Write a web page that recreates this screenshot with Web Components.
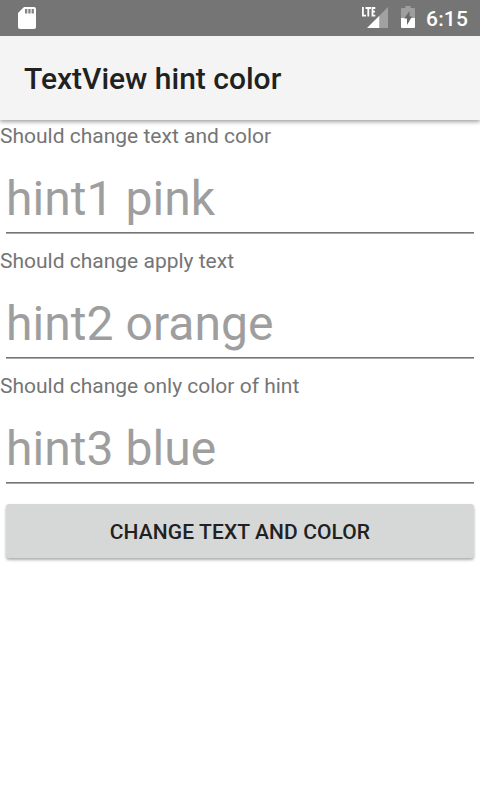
<!DOCTYPE html>
<html lang="en">
<head>
<meta charset="utf-8">
<title>TextView hint color</title>
<style>
html,body{margin:0;padding:0;background:#fff}
body{font-family:Roboto,"Liberation Sans",sans-serif;width:480px;height:800px;overflow:hidden}
</style>
</head>
<body>
<demo-screen></demo-screen>
<script>
function define(name, html) {
  const tpl = document.createElement('template');
  tpl.innerHTML = html;
  customElements.define(name, class extends HTMLElement {
    constructor() {
      super();
      this.attachShadow({ mode: 'open' }).appendChild(tpl.content.cloneNode(true));
    }
  });
}

define('status-bar', `
<style>
:host{display:flex;align-items:flex-start;height:36px;background:#757575;color:#fff;padding:0 12px 0 18px;box-sizing:border-box;position:relative;z-index:2}
.gap{flex:1}
svg{display:block;flex:none}
.sd{margin-top:7px}
.net{margin:7px 13px 0 0}
.bat{margin:6px 11px 0 0}
.time{font-size:21px;line-height:36px;font-weight:500;padding-top:1px;width:42px;white-space:nowrap;letter-spacing:.2px}
</style>
<svg class="sd" width="18" height="22" viewBox="0 0 18 22"><path fill="#fff" d="M6 0H16a2 2 0 0 1 2 2V20a2 2 0 0 1-2 2H2a2 2 0 0 1-2-2V6Z"/><path fill="#858585" d="M7 2h2.300v4.500H7zM10.300 2h2.300v4.500h-2.300zM13.600 2h2.300v4.500h-2.300z"/></svg>
<span class="gap"></span>
<svg class="net" width="26" height="21" viewBox="0 0 26 21"><path fill="#fff" fill-opacity=".32" d="M26 0V21H17.300V8.700Z"/><path fill="#fff" d="M17.300 8.700V21H5Z"/><path fill="none" stroke="#fff" stroke-width="1.800" d="M.9 0V9M0 8.600H4M3.500 1H9M6.300 1V9.500M13.300 1H10.500V8.600H13.300M10.500 4.700H13"/></svg>
<svg class="bat" width="14" height="22" viewBox="0 0 14 22"><path fill="#fff" fill-opacity=".3" d="M4.500 0h5v2H13a1 1 0 0 1 1 1v9H0V3a1 1 0 0 1 1-1h3.500z"/><path fill="#fff" d="M0 12h14v9a1 1 0 0 1-1 1H1a1 1 0 0 1-1-1z"/><path fill="#686868" d="M8.500 5v5.500H11L6 19v-6.500H3.200z"/></svg>
<span class="time"><slot></slot></span>`);

define('app-bar', `
<style>
:host{display:flex;align-items:center;height:84px;background:#f4f4f4;padding:0 24px;box-sizing:border-box;box-shadow:0 2px 4px rgba(0,0,0,.36);color:#212121;font-size:30px;font-weight:500;position:relative}
</style><span><slot></slot></span>`);

define('hint-field', `
<style>
:host{display:block;height:125px;box-sizing:border-box}
.label{font-size:21px;line-height:25px;padding-top:4px;color:#757575}
.input{margin:13px 6px 0;height:70px;line-height:73px;font-size:48px;letter-spacing:.05px;color:#9e9e9e;border-bottom:1px solid #757575;box-shadow:0 1px #a8a8a8;white-space:nowrap}
</style>
<div class="label"><slot name="label"></slot></div>
<div class="input"><slot></slot></div>`);

define('raised-button', `
<style>
:host{display:flex;align-items:center;justify-content:center;height:54px;margin:9px 6px 0;background:#d6d8d7;border-radius:3px;box-shadow:0 2px 3px rgba(0,0,0,.32);color:#212121;font-size:21px;font-weight:500;letter-spacing:.1px}
span{padding-top:2px}
</style><span><slot></slot></span>`);

define('demo-screen', `
<style>
:host{display:flex;flex-direction:column;height:800px;background:#fff}
</style>
<status-bar>6:15</status-bar>
<app-bar>TextView hint color</app-bar>
<hint-field><span slot="label">Should change text and color</span>hint1 pink</hint-field>
<hint-field><span slot="label">Should change apply text</span>hint2 orange</hint-field>
<hint-field><span slot="label">Should change only color of hint</span>hint3 blue</hint-field>
<raised-button>CHANGE TEXT AND COLOR</raised-button>`);
</script>
</body>
</html>
